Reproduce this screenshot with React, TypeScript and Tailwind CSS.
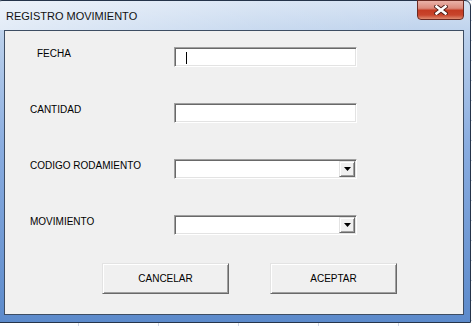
const sunken =
  "bg-white border border-t-[#a0a0a0] border-l-[#a0a0a0] border-b-white border-r-white shadow-[inset_1px_1px_0_#696969,inset_-1px_-1px_0_#e3e3e3]";
const raised =
  "bg-[#f0f0f0] border border-t-[#e3e3e3] border-l-[#e3e3e3] border-b-[#696969] border-r-[#696969] shadow-[inset_1px_1px_0_#ffffff,inset_-1px_-1px_0_#a0a0a0]";

function TextField({ cursor }: { cursor?: boolean }) {
  return (
    <div className={`w-[183px] h-[20px] ${sunken}`}>
      {cursor && <div className="ml-[11px] mt-[4px] w-px h-[12px] bg-black" />}
    </div>
  );
}

function ComboBox() {
  return (
    <div className={`w-[183px] h-[20px] p-px flex justify-end ${sunken}`}>
      <div className={`w-[16px] h-full flex items-center justify-center ${raised}`}>
        <svg width="7" height="4" viewBox="0 0 7 4" className="ml-px">
          <path d="M0 0H7L3.5 4Z" fill="#000" />
        </svg>
      </div>
    </div>
  );
}

function Row({ label, indent, children }: { label: string; indent: string; children: React.ReactNode }) {
  return (
    <div className="flex h-[20px]">
      <div className={`w-[169px] ${indent} pt-px text-[10px] leading-[12px] text-black`}>{label}</div>
      {children}
    </div>
  );
}

export default function App() {
  return (
    <div
      className="w-[472px] h-[326px] overflow-hidden bg-white bg-[linear-gradient(to_right,#d0d7e5_1px,transparent_1px),linear-gradient(to_bottom,#d0d7e5_1px,transparent_1px)] bg-size-[80px_20px] bg-position-[78px_0px]"
      style={{ fontFamily: '"Liberation Sans", Arial, sans-serif' }}
    >
      {/* dialog window */}
      <div className="-ml-[4px] w-[475px] h-[323px] flex flex-col rounded-t-[6px] border border-[#25344a] bg-[linear-gradient(to_bottom,#d5e2f3_0%,#b9cfeb_12%,#8aade0_45%,#5c8acb_100%)]">
        <div className="h-[29px] flex items-start rounded-t-[5px] bg-[linear-gradient(to_right,rgba(255,255,255,0.55),rgba(255,255,255,0.15)_55%,rgba(255,255,255,0)_90%)]">
          <span className="ml-[9px] pt-[9px] text-[11px] leading-[13px] text-[#111]">REGISTRO MOVIMIENTO</span>
          <div className="ml-auto mr-[6px] -mt-px w-[47px] h-[20px] rounded-b-[4px] border border-[#6b2a22] bg-[linear-gradient(to_bottom,#eab2a8_0%,#dc8a7c_40%,#c43b22_52%,#c8452c_78%,#df8b70_100%)] flex items-center justify-center">
            <svg width="14" height="10" viewBox="0 0 14 10">
              <path d="M2.5 1.5L11.5 8.5M11.5 1.5L2.5 8.5" stroke="#4a1a14" strokeWidth="4.4" strokeLinecap="square" />
              <path d="M2.5 1.5L11.5 8.5M11.5 1.5L2.5 8.5" stroke="#ffffff" strokeWidth="2.6" strokeLinecap="square" />
            </svg>
          </div>
        </div>

        <div className="flex-1 pl-[7px] pr-[6px] pb-[7px]">
          <div className="h-full border border-[#3d4d63] bg-[#f0f0f0] flex flex-col">
            <div className="pt-[16px] flex flex-col gap-[36px]">
              <Row label="FECHA" indent="pl-[32px]">
                <TextField cursor />
              </Row>
              <Row label="CANTIDAD" indent="pl-[25px]">
                <TextField />
              </Row>
              <Row label="CODIGO RODAMIENTO" indent="pl-[25px]">
                <ComboBox />
              </Row>
              <Row label="MOVIMIENTO" indent="pl-[25px]">
                <ComboBox />
              </Row>
            </div>

            <div className="mt-[28px] pl-[97px] flex gap-[41px]">
              <button className={`w-[127px] h-[31px] text-[10px] text-black ${raised}`}>CANCELAR</button>
              <button className={`w-[127px] h-[31px] text-[10px] text-black ${raised}`}>ACEPTAR</button>
            </div>
          </div>
        </div>
      </div>
    </div>
  );
}
